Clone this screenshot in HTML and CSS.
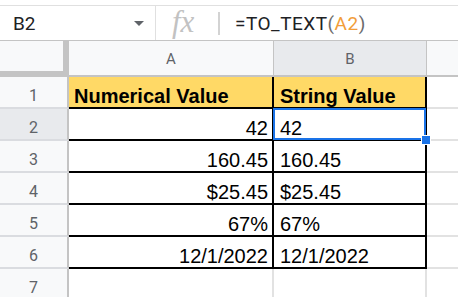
FILE: index.html
```html
<!DOCTYPE html>
<html>
<head>
<meta charset="utf-8">
<link rel="stylesheet" href="styles.css">
</head>
<body>
<div class="top-gap"></div>
<div class="formula-bar">
  <div class="name-box">
    <span class="name">B2</span>
    <svg class="caret" width="10" height="6" viewBox="0 0 10 6"><path d="M0 0 L10 0 L5 5 Z" fill="#5f6368"/></svg>
  </div>
  <div class="fx">fx</div>
  <div class="sep"></div>
  <div class="formula">=TO_TEXT<span class="paren">(</span><span class="ref">A2</span><span class="paren">)</span></div>
</div>
<div class="sheet">
  <div class="corner"></div>
  <div class="col-head">A</div>
  <div class="col-head sel">B</div>
  <div class="col-head last"></div>

  <div class="row-head">1</div>
  <div class="cell a hdr">Numerical Value</div>
  <div class="cell b hdr">String Value</div>
  <div class="cell c"></div>

  <div class="row-head sel">2</div>
  <div class="cell a num">42</div>
  <div class="cell b active">42<div class="sel-box"></div><div class="handle"></div></div>
  <div class="cell c"></div>

  <div class="row-head">3</div>
  <div class="cell a num">160.45</div>
  <div class="cell b">160.45</div>
  <div class="cell c"></div>

  <div class="row-head">4</div>
  <div class="cell a num">$25.45</div>
  <div class="cell b">$25.45</div>
  <div class="cell c"></div>

  <div class="row-head">5</div>
  <div class="cell a num">67%</div>
  <div class="cell b">67%</div>
  <div class="cell c"></div>

  <div class="row-head">6</div>
  <div class="cell a num">12/1/2022</div>
  <div class="cell b">12/1/2022</div>
  <div class="cell c"></div>

  <div class="row-head">7</div>
  <div class="cell empty"></div>
  <div class="cell empty"></div>
  <div class="cell c"></div>
</div>
</body>
</html>
```

FILE: styles.css
```css
* { box-sizing: border-box; }
html, body { margin: 0; padding: 0; background: #fff; overflow: hidden; }
body { width: 458px; height: 297px; font-family: "Liberation Sans", Arial, sans-serif; }

.top-gap { height: 5px; background: #fff; }

.formula-bar {
  height: 36px;
  border-top: 1px solid #e0e0e0;
  border-bottom: 1px solid #c4c4c4;
  display: flex;
  align-items: center;
  font-family: Roboto, "Liberation Sans", sans-serif;
  font-size: 19px;
  color: #202124;
}
.name-box {
  width: 156px;
  height: 100%;
  border-right: 1px solid #e0e0e0;
  display: flex;
  align-items: center;
  padding-left: 13px;
  padding-right: 11px;
}
.name { flex: 1; }
.caret { display: block; margin-top: 2px; }
.fx {
  width: 62px;
  padding-left: 16px;
  font-family: "Liberation Serif", serif;
  font-style: italic;
  font-size: 31px;
  color: #c2c2c2;
  line-height: 1;
  margin-top: -3px;
}
.sep { width: 2px; height: 23px; background: #d3d3d3; margin-right: 15px; }
.formula { letter-spacing: 0.5px; }
.paren { color: #6b6b6b; }
.ref { color: #f29d38; }

.sheet {
  display: grid;
  grid-template-columns: 69px 205px 153px 1fr;
  grid-template-rows: 36px repeat(7, 32px);
}

.corner {
  background: #f8f9fa;
  border-right: 6px solid #c4c4c4;
  border-bottom: 6px solid #c4c4c4;
}
.col-head {
  background: #f8f9fa;
  border-bottom: 2px solid #c4c4c4;
  border-right: 1px solid #c4c4c4;
  display: flex;
  align-items: center;
  justify-content: center;
  font-family: Roboto, "Liberation Sans", sans-serif;
  font-size: 15px;
  color: #5f6368;
  padding-top: 1px;
}
.col-head.sel { background: #e8eaed; }
.col-head.last { border-right: none; }

.row-head {
  background: #f8f9fa;
  border-right: 2px solid #c4c4c4;
  border-bottom: 2px solid #dadce0;
  display: flex;
  align-items: flex-end;
  justify-content: center;
  padding-bottom: 3px;
  font-family: Roboto, "Liberation Sans", sans-serif;
  font-size: 16px;
  line-height: 16px;
  color: #5f6368;
}
.row-head.sel { background: #e8eaed; }

.cell {
  position: relative;
  display: flex;
  align-items: flex-end;
  font-size: 20px;
  line-height: 20px;
  color: #000;
  padding-bottom: 1px;
  white-space: nowrap;
}
.cell.a, .cell.b {
  border-right: 2px solid #000;
  border-bottom: 2px solid #000;
}
.cell.a { padding-left: 5px; }
.cell.a.num { justify-content: flex-end; padding-right: 4px; padding-left: 0; }
.cell.b { padding-left: 6px; }
.cell.hdr { background: #ffd966; font-weight: bold; }
.cell.c { border-bottom: 2px solid #e2e2e2; }
.cell.empty { border-right: 2px solid #e2e2e2; }

.sel-box {
  position: absolute;
  left: -1px;
  top: -1px;
  right: -1px;
  bottom: -1px;
  border: 2px solid #1a73e8;
}
.handle {
  position: absolute;
  right: -6px;
  bottom: -6px;
  width: 10px;
  height: 10px;
  background: #1a73e8;
  border: 1px solid #fff;
  z-index: 2;
}
```
